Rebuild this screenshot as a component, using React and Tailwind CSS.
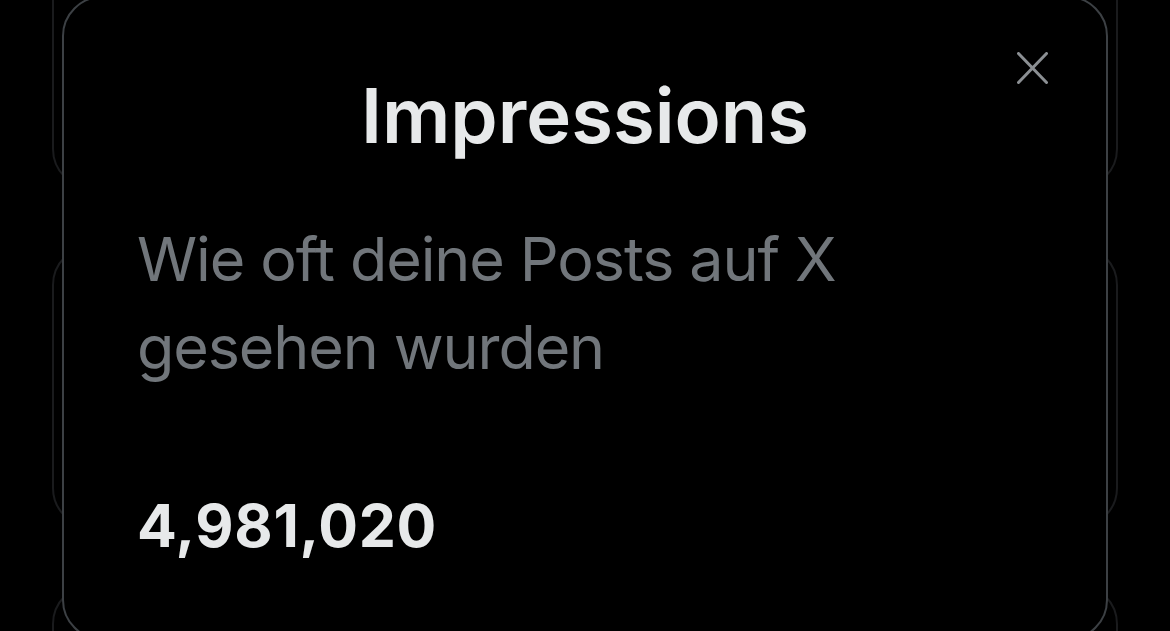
import { useState } from "react";

function BackgroundCards() {
  return (
    <div className="flex flex-col gap-[56px] px-[52px] -mt-[94px]">
      <div className="h-[283px] rounded-[40px] border-2 border-[#1a1b1d]" />
      <div className="h-[283px] rounded-[40px] border-2 border-[#1a1b1d]" />
      <div className="h-[283px] rounded-[40px] border-2 border-[#1a1b1d]" />
    </div>
  );
}

function CloseIcon() {
  return (
    <svg width="31" height="32" viewBox="0 0 31 32" fill="none">
      <path
        d="M1.5 1.5L29.5 30.5M29.5 1.5L1.5 30.5"
        stroke="#8b8f93"
        strokeWidth="3"
        strokeLinecap="round"
      />
    </svg>
  );
}

export default function App() {
  const [open, setOpen] = useState(true);

  return (
    <div
      className="relative h-[631px] w-[1170px] overflow-hidden bg-black"
      style={{ fontFamily: "Inter, 'Noto Sans', sans-serif" }}
    >
      <BackgroundCards />

      {/* Impressions sheet */}
      {open && (
        <div className="absolute left-[62px] top-[-4px] h-[644px] w-[1046px] rounded-[40px] border-2 border-[#3c4044] bg-black">
          <button
            onClick={() => setOpen(false)}
            className="absolute left-[953px] top-[54px]"
          >
            <CloseIcon />
          </button>

          <div className="flex flex-col pt-[79px]">
            <h1 className="text-center text-[76px] font-semibold leading-[76px] text-[#e7e9ea]">
              Impressions
            </h1>
            <p className="mt-[62px] px-[73px] text-[61px] leading-[88px] tracking-[-1.1px] text-[#71767b]">
              Wie oft deine Posts auf X gesehen wurden
            </p>
            <p className="mt-[105px] px-[73px] text-[59px] font-bold leading-[59px] tracking-[0.7px] text-[#e7e9ea]">
              4,981,020
            </p>
          </div>
        </div>
      )}
    </div>
  );
}
